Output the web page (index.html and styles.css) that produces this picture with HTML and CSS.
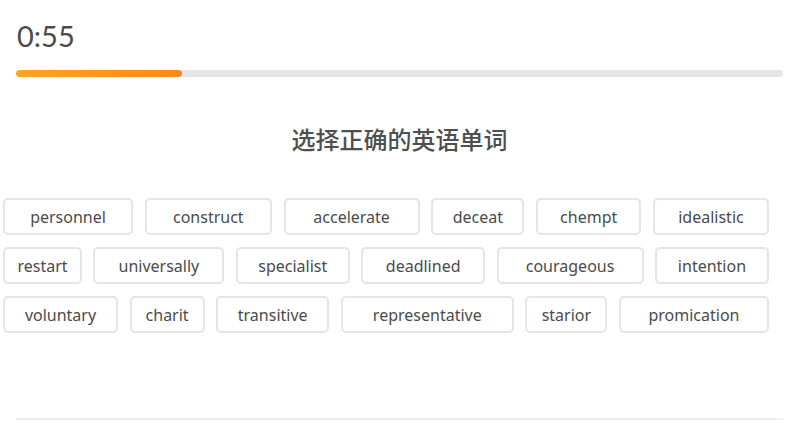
FILE: index.html
```html
<!DOCTYPE html>
<html lang="zh-CN">
<head>
	<meta charset="UTF-8">
	<title>选择正确的英语单词</title>
	<link rel="stylesheet" href="styles.css">
</head>
<body>
	<div class="page">
		<div class="timer">0:55</div>
		<div class="bar"><div class="bar-fill"></div></div>
		<h1 class="title">选择正确的英语单词</h1>
		<div class="words">
			<div class="row row1">
				<span class="word">personnel</span>
				<span class="word">construct</span>
				<span class="word">accelerate</span>
				<span class="word">deceat</span>
				<span class="word">chempt</span>
				<span class="word">idealistic</span>
			</div>
			<div class="row row2">
				<span class="word">restart</span>
				<span class="word">universally</span>
				<span class="word">specialist</span>
				<span class="word">deadlined</span>
				<span class="word">courageous</span>
				<span class="word">intention</span>
			</div>
			<div class="row row3">
				<span class="word">voluntary</span>
				<span class="word">charit</span>
				<span class="word">transitive</span>
				<span class="word">representative</span>
				<span class="word">starior</span>
				<span class="word">promication</span>
			</div>
		</div>
		<div class="footer-line"></div>
	</div>
</body>
</html>
```

FILE: styles.css
```css
*{
	margin: 0;
	padding: 0;
	box-sizing: border-box;
}
body{
	background: #fff;
	font-family: Lato, "Noto Sans", "Noto Sans CJK SC", sans-serif;
	color: #4b4b4b;
}
.page{
	width: 802px;
	height: 429px;
	padding: 19px 19px 0 16px;
}
.timer{
	font-size: 29px;
	line-height: 34px;
	color: #4b4b4b;
	padding-left: 1px;
}
.bar{
	margin-top: 17px;
	height: 7px;
	border-radius: 4px;
	background: #e5e5e5;
	overflow: hidden;
}
.bar-fill{
	width: 166px;
	height: 100%;
	border-radius: 4px;
	background: linear-gradient(90deg, #ffa51d, #ff8719);
}
.title{
	margin-top: 46px;
	text-align: center;
	font-family: "Noto Sans CJK SC", sans-serif;
	font-weight: 500;
	font-size: 24px;
	line-height: 32px;
	color: #4f4f4f;
}
.words{
	margin-top: 43px;
	margin-left: -13px;
	width: 766px;
	display: flex;
	flex-direction: column;
	gap: 12px;
}
.row{
	display: grid;
	justify-content: space-between;
}
.row1{
	grid-template-columns: 130px 127px 136px 93px 105px 116px;
}
.row2{
	grid-template-columns: 79px 131px 114px 124px 147px 114px;
}
.row3{
	grid-template-columns: 115px 75px 113px 173px 82px 150px;
}
.word{
	height: 37px;
	border: 2px solid #e5e5e5;
	border-radius: 5px;
	display: flex;
	align-items: center;
	justify-content: center;
	font-family: "Noto Sans", Lato, sans-serif;
	font-size: 16px;
	color: #4b4b4b;
	white-space: nowrap;
}
.footer-line{
	margin-top: 85px;
	height: 2px;
	background: #efefef;
}
```
